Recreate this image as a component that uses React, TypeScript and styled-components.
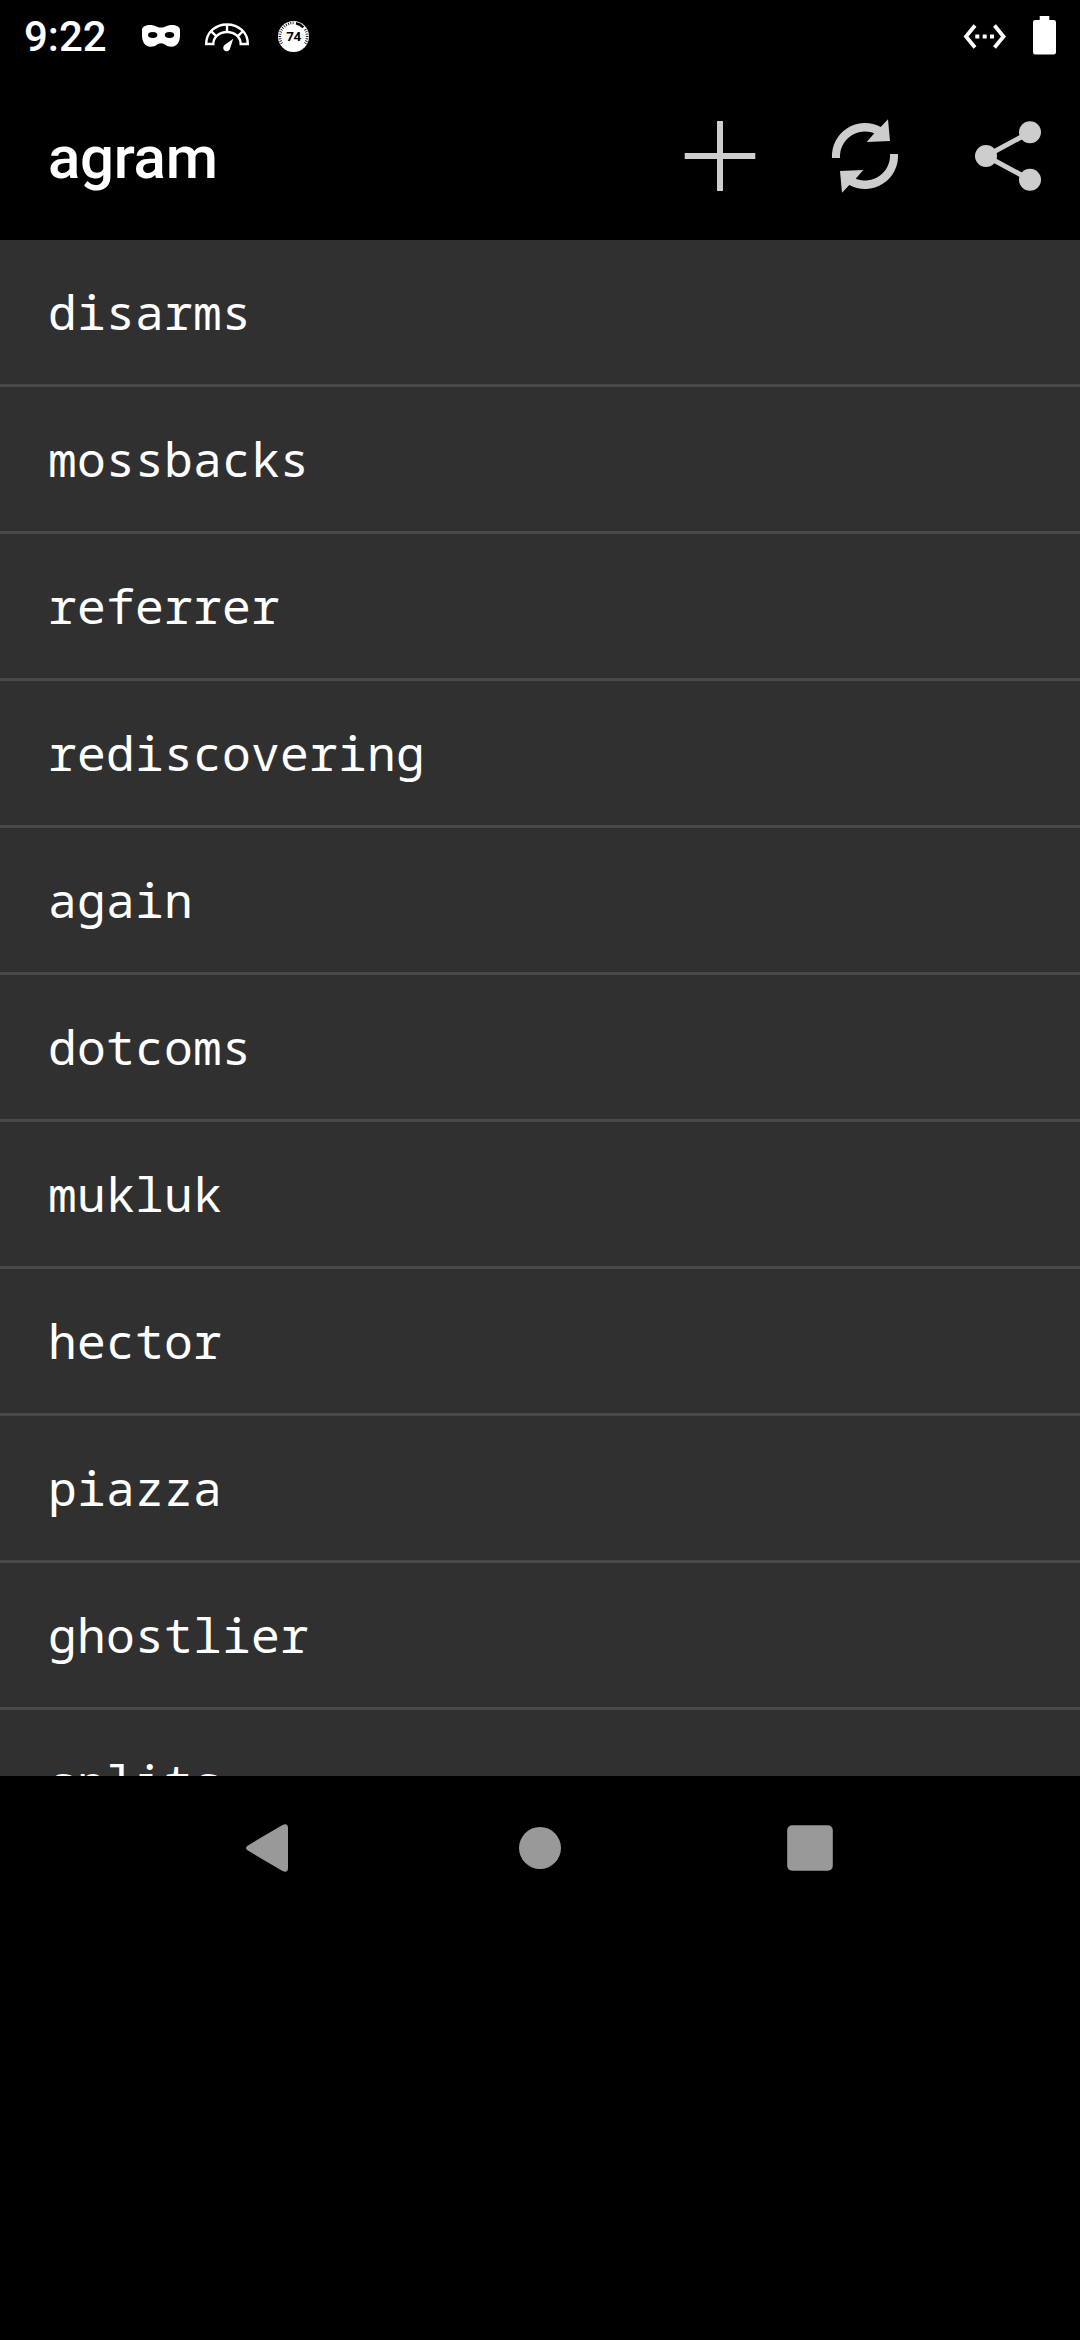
import React from "react";
import styled, { createGlobalStyle } from "styled-components";

const GlobalStyle = createGlobalStyle`
  html, body {
    margin: 0;
    background: #000;
  }
  * {
    box-sizing: border-box;
  }
`;

const Screen = styled.div`
  display: flex;
  flex-direction: column;
  width: 1080px;
  height: 2340px;
  overflow: hidden;
  background: #000;
  color: #fff;
  font-family: Roboto, "Liberation Sans", sans-serif;
`;

const StatusBar = styled.header`
  display: flex;
  justify-content: space-between;
  height: 72px;
  padding: 0 24px;
`;

const StatusGroup = styled.div`
  display: flex;
  height: 72px;
`;

const Clock = styled.time`
  width: 108px;
  font-size: 42px;
  font-weight: 500;
  line-height: 74px;
`;

const Glyph = styled.svg<{ $width: number }>`
  display: block;
  flex: none;
  width: ${(p) => p.$width}px;
  height: 72px;
`;

const AppBar = styled.div`
  display: flex;
  align-items: center;
  height: 168px;
  padding-left: 48px;
`;

const Title = styled.h1`
  flex: 1;
  margin: 0;
  padding-top: 4px;
  font-size: 60px;
  font-weight: 500;
  line-height: 70px;
  letter-spacing: -0.3px;
`;

const Action = styled.button`
  width: 144px;
  height: 144px;
  padding: 0;
  border: 0;
  background: none;
  color: #cdcdcd;

  svg {
    display: block;
    width: 144px;
    height: 144px;
  }
`;

const WordList = styled.ul`
  height: 1536px;
  margin: 0;
  padding: 0;
  overflow: hidden;
  list-style: none;
  background: #303030;
`;

const Word = styled.li`
  height: 147px;
  padding: 0 48px;
  border-bottom: 3px solid #494949;
  font-family: "Droid Sans Mono", "Noto Sans Mono", "DejaVu Sans Mono", monospace;
  font-size: 48px;
  line-height: 144px;
  letter-spacing: 0.2px;
`;

const NavBar = styled.nav`
  display: grid;
  grid-template-columns: repeat(3, 270px);
  justify-content: center;
  height: 144px;
`;

const NavButton = styled.button`
  display: grid;
  place-items: center;
  padding: 0;
  border: 0;
  background: none;
  color: #999;
`;

const words = [
  "disarms",
  "mossbacks",
  "referrer",
  "rediscovering",
  "again",
  "dotcoms",
  "mukluk",
  "hector",
  "piazza",
  "ghostlier",
  "splits",
];

const MaskIcon = () => (
  <Glyph $width={58} viewBox="132 0 58 72">
    <path
      fill="#fff"
      d="M142 30C142 26.500 146 25 150 25C155 25 157 27.600 161 27.600C165 27.600 167 25 172 25C176 25 180 26.500 180 30V35C180 42 177 46.700 171.500 46.700C166 46.700 164.500 43.200 161 43.200C157.500 43.200 156 46.700 150.500 46.700C145 46.700 142 42 142 35Z"
    />
    <ellipse cx="152.700" cy="35" rx="4.700" ry="2.900" />
    <ellipse cx="169.500" cy="35" rx="4.700" ry="2.900" />
  </Glyph>
);

const GaugeIcon = () => (
  <Glyph $width={74} viewBox="190 0 74 72">
    <g fill="none" stroke="#fff" strokeWidth="2.400">
      <path d="M206.200 44C206.200 32.500 215.300 24.500 227 24.500S247.800 32.500 247.800 44H240.700C240.700 37 234.500 32 227 32S213.300 37 213.300 44Z" />
      <path d="M227 24V32M216.500 36.300L211.200 31.300M237.500 36.300L242.800 31.300" />
    </g>
    <path fill="#fff" d="M233.300 38.800L230.200 48A3.500 3.500 0 1 1 224.200 45.300Z" />
  </Glyph>
);

const ScoreIcon = () => (
  <Glyph $width={60} viewBox="264 0 60 72">
    <circle cx="293.500" cy="36.500" r="15.500" fill="#fff" />
    <g fill="none" stroke="#000" strokeWidth="2.600">
      <path d="M281.800 43.500A13.600 13.600 0 0 1 293.500 22.900" strokeDasharray="0.8 1.500" />
      <path d="M305.200 43.500A13.600 13.600 0 0 0 305 29.200" strokeDasharray="0.8 1.500" />
      <path d="M296 23.200A13.500 13.500 0 0 1 303.300 27.300" />
    </g>
    <text
      x="293.500"
      y="41.300"
      textAnchor="middle"
      fontFamily="Roboto, sans-serif"
      fontSize="13.500"
      fontWeight="700"
      letterSpacing="-0.5"
    >
      74
    </text>
  </Glyph>
);

const EthernetIcon = () => (
  <Glyph $width={70} viewBox="950 0 70 72">
    <path
      d="M975 25.500L966 36.500L975 47.500M994.500 25.500L1003.500 36.500L994.500 47.500"
      fill="none"
      stroke="#fff"
      strokeWidth="3.800"
    />
    <path d="M975.300 34.600h4v4h-4zM982.700 34.600h4v4h-4zM990 34.600h4v4h-4z" fill="#fff" />
  </Glyph>
);

const BatteryIcon = () => (
  <Glyph $width={36} viewBox="1020 0 36 72">
    <path
      fill="#fff"
      d="M1039.700 16H1049.300V20H1053.700A2.300 2.300 0 0 1 1056 22.300V52.300A2.300 2.300 0 0 1 1053.700 54.600H1035.300A2.300 2.300 0 0 1 1033 52.300V22.300A2.300 2.300 0 0 1 1035.300 20H1039.700Z"
    />
  </Glyph>
);

const AddIcon = () => (
  <svg viewBox="0 0 144 144" fill="currentColor">
    <path d="M69 37h6v32h20.300h12v6H75v32h-6V75H36.700v-6H69z" />
  </svg>
);

const SyncIcon = () => (
  <svg viewBox="-73 -72 144 144">
    {[0, 180].map((angle) => (
      <g key={angle} transform={`rotate(${angle})`} fill="currentColor">
        <path d="M-33 2A33 33 0 0 1 15.700 -29L23 -36.700L25 -15L1.700 -14L9.300 -22.700A25 25 0 0 0 -25 2Z" />
      </g>
    ))}
  </svg>
);

const ShareIcon = () => (
  <svg viewBox="936 84 144 144" fill="currentColor">
    <path d="M1030 132.300L986 156L1030 179.700" fill="none" stroke="currentColor" strokeWidth="5" />
    <circle cx="986" cy="156" r="11" />
    <circle cx="1030" cy="132.300" r="11" />
    <circle cx="1030" cy="179.700" r="11" />
  </svg>
);

export default function App() {
  return (
    <Screen>
      <GlobalStyle />
      <StatusBar>
        <StatusGroup>
          <Clock>9:22</Clock>
          <MaskIcon />
          <GaugeIcon />
          <ScoreIcon />
        </StatusGroup>
        <StatusGroup>
          <EthernetIcon />
          <BatteryIcon />
        </StatusGroup>
      </StatusBar>
      <AppBar>
        <Title>agram</Title>
        <Action>
          <AddIcon />
        </Action>
        <Action>
          <SyncIcon />
        </Action>
        <Action>
          <ShareIcon />
        </Action>
      </AppBar>
      <WordList>
        {words.map((word) => (
          <Word key={word}>{word}</Word>
        ))}
      </WordList>
      <NavBar>
        <NavButton>
          <svg width="48" height="48" fill="currentColor">
            <path d="M1.500 21.700L36.500 .9Q42 -1.500 42 4V44Q42 49.500 36.500 47.100L1.500 26.300Q-1.500 24 1.500 21.700Z" />
          </svg>
        </NavButton>
        <NavButton>
          <svg width="48" height="48" fill="currentColor">
            <circle cx="24" cy="24" r="21" />
          </svg>
        </NavButton>
        <NavButton>
          <svg width="48" height="48" fill="currentColor">
            <rect x="1.200" y="1.200" width="45.600" height="45.600" rx="5" />
          </svg>
        </NavButton>
      </NavBar>
    </Screen>
  );
}
